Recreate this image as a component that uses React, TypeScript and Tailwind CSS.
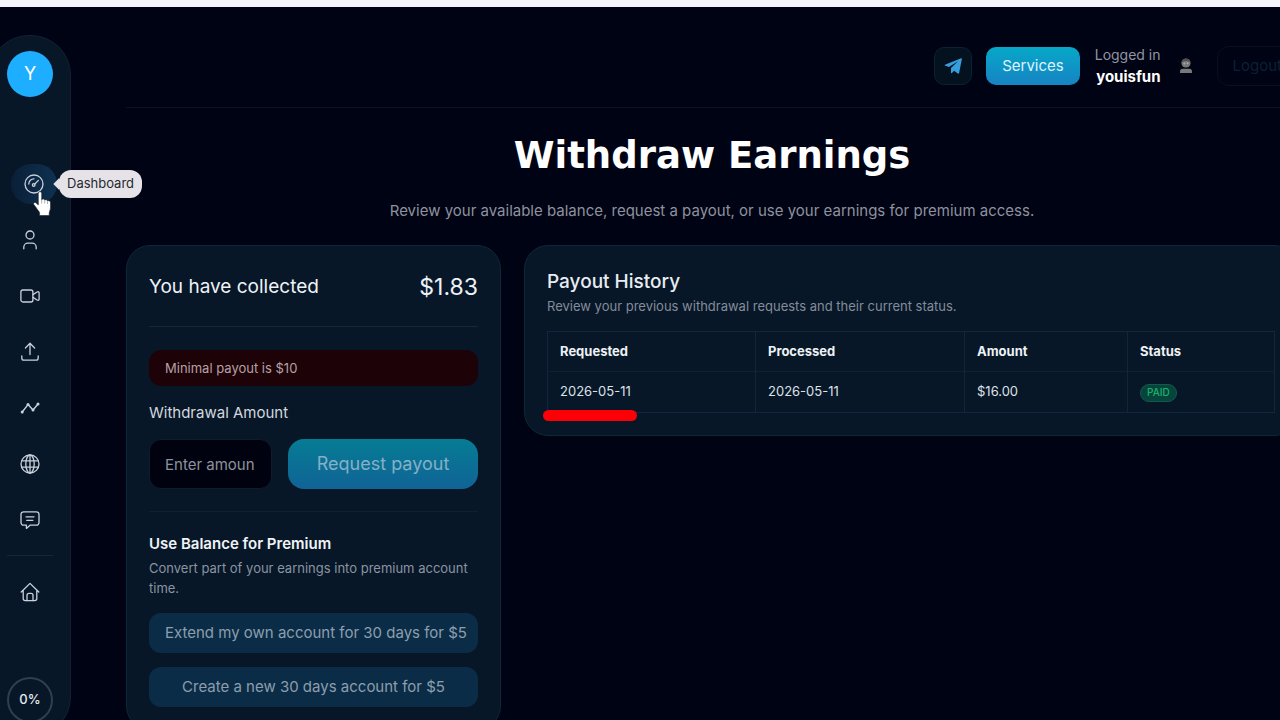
import type { ReactNode } from "react";

const payouts = [
  {
    requested: "2026-05-11",
    processed: "2026-05-11",
    amount: "$16.00",
    status: "PAID",
  },
];

function Icon({ children }: { children: ReactNode }) {
  return (
    <svg
      viewBox="0 0 20 20"
      fill="none"
      stroke="currentColor"
      strokeWidth="1.3"
      strokeLinecap="round"
      strokeLinejoin="round"
      className="h-5 w-5"
      aria-hidden="true"
    >
      {children}
    </svg>
  );
}

const navItems = [
  {
    label: "Profile",
    icon: (
      <Icon>
        <circle cx="10" cy="5" r="4" />
        <path d="M3.800 18.800v-1.600a4 4 0 0 1 4-4h4.400a4 4 0 0 1 4 4v1.600" />
      </Icon>
    ),
  },
  {
    label: "Videos",
    icon: (
      <Icon>
        <rect x="0.9" y="4" width="12" height="12" rx="2" />
        <path d="M12.900 8.600l4.200-2.600c1.100-.6 2-.2 2 .8v6.400c0 1-.9 1.400-2 .8l-4.200-2.600" />
      </Icon>
    ),
  },
  {
    label: "Upload",
    icon: (
      <Icon>
        <path d="M10 12.600V1.400M5.400 6L10 1.300 14.600 6M1.800 14v2c0 1.300.9 2.200 2.200 2.200h12c1.300 0 2.200-.9 2.200-2.200v-2" />
      </Icon>
    ),
  },
  {
    label: "Statistics",
    icon: (
      <Icon>
        <path d="M2.200 14L8 6.600l5 5.400 5-6" strokeWidth="1.4" />
        <g fill="currentColor" stroke="none">
          <circle cx="2.2" cy="14" r="1.5" />
          <circle cx="8" cy="6.6" r="1.5" />
          <circle cx="13" cy="12" r="1.5" />
          <circle cx="18" cy="6" r="1.5" />
        </g>
      </Icon>
    ),
  },
  {
    label: "Websites",
    icon: (
      <Icon>
        <circle cx="10" cy="10" r="9" />
        <ellipse cx="10" cy="10" rx="4.2" ry="9" />
        <path d="M10 1v18M1.800 6.800h16.400M1.800 13.200h16.400" />
      </Icon>
    ),
  },
  {
    label: "Messages",
    icon: (
      <Icon>
        <path d="M3.600 1.800h12.800a2.600 2.600 0 0 1 2.600 2.600v8.200a2.600 2.600 0 0 1-2.600 2.600H10l-3.600 3.200v-3.200H3.600A2.600 2.600 0 0 1 1 12.600V4.400a2.600 2.600 0 0 1 2.600-2.600z" />
        <path d="M6 6.800h8M6.800 10.400h6" />
      </Icon>
    ),
  },
];

function GaugeIcon() {
  return (
    <Icon>
      <circle cx="10" cy="10" r="9" />
      <path d="M4.800 10a5.200 5.200 0 0 1 5.200-5.200M10.600 10.200l3.800-3.800" />
      <circle cx="9.700" cy="11" r="1.300" />
    </Icon>
  );
}

function HandCursor() {
  return (
    <svg viewBox="0 0 20 28" className="h-7 w-5" aria-hidden="true">
      <path
        d="M5.300 3.600c0-2.500 3.400-2.500 3.400 0v6.200c.4-1.300 2.900-1.100 3 .4.700-1 2.700-.6 2.800.8.800-.8 3-.3 3 1.600v5.400c0 2.200-1.300 3.400-1.300 5.200v2.300H6.600v-2.300c0-1.700-2-3-3-5L.8 14.500c-.8-1.600 1-2.800 2.300-1.600l2.200 2z"
        fill="#fff"
        stroke="#1b2430"
        strokeWidth="0.6"
      />
      <path d="M8.700 10v3.500M11.700 10.500v3M14.500 11.500v2.500" stroke="#8a9099" strokeWidth="0.7" />
    </svg>
  );
}

function Sidebar() {
  return (
    <aside className="-ml-[11px] mt-7 flex h-[702px] w-[82px] shrink-0 flex-col items-center rounded-[40px] border border-[#102230] bg-[#071728] pt-[15px] text-[#c9d1db]">
      <a
        href="#account"
        className="flex h-[46px] w-[46px] shrink-0 items-center justify-center rounded-full bg-[#1eaeff] text-lg text-white"
      >
        Y
      </a>

      <nav className="mt-[59px] flex flex-col items-center">
        <a
          href="#dashboard"
          aria-label="Dashboard"
          className="relative flex h-14 w-14 items-center justify-center pl-2"
        >
          <span className="flex h-10 w-[46px] items-center justify-center rounded-full bg-linear-to-r from-[#0a1f38] to-[#0e3150]">
            <GaugeIcon />
          </span>
          <span className="absolute top-[14px] left-[57px] z-10 flex h-7 items-center rounded-xl bg-[#e5e3e8] px-2 text-[13px] text-[#26282e]">
            <span className="absolute top-2.5 -left-1 h-2 w-2 rotate-45 bg-[#e5e3e8]" />
            <span className="relative">Dashboard</span>
          </span>
          <span className="absolute top-[34px] left-[31px] z-20">
            <HandCursor />
          </span>
        </a>
        {navItems.map((item) => (
          <a
            key={item.label}
            href={`#${item.label.toLowerCase()}`}
            aria-label={item.label}
            className="flex h-14 w-14 items-center justify-center"
          >
            {item.icon}
          </a>
        ))}
        <hr className="mt-[7px] w-[46px] border-[#10283d]" />
        <a
          href="#home"
          aria-label="Home"
          className="mt-2 flex h-14 w-14 items-center justify-center"
        >
          <Icon>
            <path d="M1.200 10L10 1.400 18.800 10M3.200 8.400v8.200c0 1.200.8 2 2 2h9.600c1.200 0 2-.8 2-2V8.400" />
            <path d="M7 18.600v-5.200c0-1.200.8-2 2-2h2c1.200 0 2 .8 2 2v5.200" />
          </Icon>
        </a>
      </nav>

      <div className="mt-[57px] flex h-[46px] w-[46px] shrink-0 items-center justify-center rounded-full border-2 border-[#303e4d] text-[13px] font-medium text-[#e6ebf0]">
        0%
      </div>
    </aside>
  );
}

function Header() {
  return (
    <header className="flex h-[83px] items-center justify-end border-b border-[#091421]">
      <a
        href="#telegram"
        aria-label="Telegram"
        className="flex h-[38px] w-[38px] items-center justify-center rounded-[10px] border border-[#0b2134] bg-[#04111f]"
      >
        <svg viewBox="0 0 18 18" className="h-[18px] w-[18px]" aria-hidden="true">
          <path
            d="M17.200 1.200L.9 7.700c-.5.200-.5.700 0 .9l4 1.400L14 4.200 7 11v4.600c0 .6.500.7.900.3l2.200-2.200 3.700 2.800c.6.400 1.100.2 1.300-.5L17.900 1.900c.1-.6-.2-.9-.7-.7z"
            fill="#379ede"
          />
        </svg>
      </a>
      <button
        type="button"
        className="ml-3.5 h-[38px] rounded-[10px] bg-linear-to-b from-[#06a8c8] to-[#1683c4] px-4 text-[15px] text-[#dff4fb]"
      >
        Services
      </button>
      <div className="ml-[15px] text-right">
        <p className="text-sm leading-[22px] text-[#9095a3]">Logged in</p>
        <p className="text-[15px] leading-[22px] font-bold text-white">youisfun</p>
      </div>
      <svg viewBox="0 0 14 18" className="ml-[18px] h-[18px] w-3.5" aria-hidden="true">
        <circle cx="7" cy="6" r="4.600" fill="#77787a" />
        <path d="M2.800 5c.6-4.400 7.800-4.400 8.400 0L7 3.800z" fill="#4d4e50" />
        <circle cx="5.400" cy="6.400" r="1" fill="#a9aaab" />
        <circle cx="8.600" cy="6.200" r="1" fill="#a9aaab" />
        <path d="M1 16v-1.600c0-1.600 1-2.600 2.600-2.600h6.800c1.600 0 2.600 1 2.600 2.600V16z" fill="#77787a" />
      </svg>
      <button
        type="button"
        className="ml-6 h-10 rounded-xl border border-[#07101c] px-[15px] text-[15px] text-[#0a2036]"
      >
        Logout
      </button>
    </header>
  );
}

function BalanceCard() {
  return (
    <section className="rounded-3xl border border-[#0d2738] bg-[#071728] p-[22px]">
      <div className="flex h-[58px] items-start justify-between pt-[3px] text-[#eef2f6]">
        <h2 className="text-[19px] leading-8">You have collected</h2>
        <span className="text-[23px] leading-8">$1.83</span>
      </div>
      <hr className="border-[#142838]" />

      <p
        role="alert"
        className="mt-[23px] rounded-xl bg-[#1d0307] px-4 py-2 text-[13px] leading-5 text-[#b8a0a5]"
      >
        Minimal payout is $10
      </p>

      <form onSubmit={(e) => e.preventDefault()}>
        <label htmlFor="amount" className="mt-[15px] block text-[15px] leading-6 text-[#d3d8df]">
          Withdrawal Amount
        </label>
        <div className="mt-3.5 flex gap-4">
          <input
            id="amount"
            type="text"
            placeholder="Enter amoun"
            className="h-[50px] w-[123px] rounded-xl border border-[#101b2b] bg-[#00020f] px-[15px] text-base text-white placeholder:text-[15px] placeholder:text-[#8e929d]"
          />
          <button
            type="submit"
            className="h-[50px] flex-1 rounded-2xl bg-linear-to-b from-[#067c94] to-[#106396] text-lg text-[#85b1c6]"
          >
            Request payout
          </button>
        </div>
      </form>

      <hr className="mt-[22px] border-[#0d2130]" />
      <h3 className="mt-5 text-[15px] leading-6 font-semibold text-[#f0f3f6]">
        Use Balance for Premium
      </h3>
      <p className="mt-0.5 text-[13px] leading-5 text-[#8b94a1]">
        Convert part of your earnings into premium account time.
      </p>
      <div className="mt-[15px] flex flex-col gap-3.5">
        <button
          type="button"
          className="h-10 rounded-xl bg-[#0b2c46] px-4 text-[15px] whitespace-nowrap text-[#8c9eae]"
        >
          Extend my own account for 30 days for $5
        </button>
        <button
          type="button"
          className="h-10 rounded-xl bg-[#0b2c46] px-4 text-[15px] whitespace-nowrap text-[#8c9eae]"
        >
          Create a new 30 days account for $5
        </button>
      </div>
    </section>
  );
}

function PayoutHistory() {
  return (
    <section className="rounded-3xl border border-[#0d2738] bg-[#071728] p-[22px]">
      <h2 className="text-[19px] leading-[27px] font-medium text-[#e8edf2]">
        Payout History
      </h2>
      <p className="text-[13px] leading-[22px] text-[#838c99]">
        Review your previous withdrawal requests and their current status.
      </p>
      <div className="relative mt-3.5">
        <table className="w-full table-fixed border-collapse border border-[#10273f] text-left text-[13px]">
          <thead>
            <tr className="h-10 border-b border-[#0c2138] text-[#eef1f4]">
              <th className="w-[208px] border-r border-[#10273a] px-3 font-bold">Requested</th>
              <th className="w-[209px] border-r border-[#10273a] px-3 font-bold">Processed</th>
              <th className="w-[163px] border-r border-[#10273a] px-3 font-bold">Amount</th>
              <th className="px-3 font-bold">Status</th>
            </tr>
          </thead>
          <tbody>
            {payouts.map((p) => (
              <tr key={p.requested} className="h-[41px] text-[#dce1e7]">
                <td className="border-r border-[#10273a] px-3">{p.requested}</td>
                <td className="border-r border-[#10273a] px-3">{p.processed}</td>
                <td className="border-r border-[#10273a] px-3">{p.amount}</td>
                <td className="px-3">
                  <span className="inline-flex h-[18px] items-center rounded-full border border-[#105c4a] bg-[#07443b] px-1.5 text-[10px] font-medium text-[#1eb06a]">
                    {p.status}
                  </span>
                </td>
              </tr>
            ))}
          </tbody>
        </table>
        {/* Marker stroke under the request date */}
        <span className="absolute -bottom-2 -left-1 h-[11px] w-[94px] rounded-md bg-[#fb0007]" />
      </div>
    </section>
  );
}

export default function App() {
  return (
    <div className="h-screen overflow-hidden border-t-7 border-[#f4f5f9] bg-[#000313] font-['Inter',sans-serif]">
      <div className="flex">
        <Sidebar />
        <main className="-mr-[18px] ml-[55px] min-w-0 flex-1 pt-[18px]">
          <Header />
          <h1 className="mt-[25px] text-center font-['DejaVu_Sans',sans-serif] text-[37px] leading-[46px] font-bold text-white">
            Withdraw Earnings
          </h1>
          <p className="mt-5 text-center text-[15px] leading-6 text-[#8e929f]">
            Review your available balance, request a payout, or use your earnings for
            premium access.
          </p>
          <div className="mt-[22px] grid grid-cols-[375px_minmax(0,1fr)] items-start gap-[23px]">
            <BalanceCard />
            <PayoutHistory />
          </div>
        </main>
      </div>
    </div>
  );
}
